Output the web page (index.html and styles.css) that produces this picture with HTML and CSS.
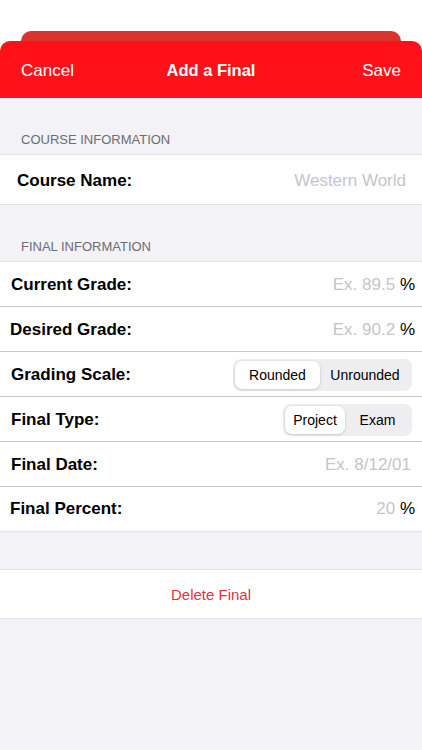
FILE: index.html
```html
<!DOCTYPE html>
<html>
<head>
<meta charset="utf-8">
<link rel="stylesheet" href="styles.css">
</head>
<body>
<div class="top"></div>
<div class="back-card"></div>
<header class="nav">
  <span class="nav-btn nav-left">Cancel</span>
  <span class="nav-title">Add a Final</span>
  <span class="nav-btn nav-right">Save</span>
</header>
<main class="content">
  <div class="section-head">COURSE INFORMATION</div>
  <div class="group">
    <div class="row row-course">
      <span class="label">Course Name:</span>
      <span class="value placeholder pad-16">Western World</span>
    </div>
  </div>

  <div class="section-head">FINAL INFORMATION</div>
  <div class="group">
    <div class="row">
      <span class="label">Current Grade:</span>
      <span class="value pad-7"><span class="placeholder">Ex. 89.5</span> %</span>
    </div>
    <div class="row">
      <span class="label label-10">Desired Grade:</span>
      <span class="value pad-7"><span class="placeholder">Ex. 90.2</span> %</span>
    </div>
    <div class="row">
      <span class="label">Grading Scale:</span>
      <div class="seg">
        <span class="seg-item seg-on seg-rounded">Rounded</span>
        <span class="seg-item seg-unrounded">Unrounded</span>
      </div>
    </div>
    <div class="row">
      <span class="label">Final Type:</span>
      <div class="seg">
        <span class="seg-item seg-on seg-project">Project</span>
        <span class="seg-item seg-exam">Exam</span>
      </div>
    </div>
    <div class="row">
      <span class="label">Final Date:</span>
      <span class="value placeholder pad-11">Ex. 8/12/01</span>
    </div>
    <div class="row row-last">
      <span class="label label-10">Final Percent:</span>
      <span class="value pad-7"><span class="placeholder">20</span> %</span>
    </div>
  </div>

  <div class="group delete-group">
    <div class="delete">Delete Final</div>
  </div>
</main>
</body>
</html>
```

FILE: styles.css
```css
* { box-sizing: border-box; }
html, body {
  margin: 0;
  padding: 0;
  height: 100%;
}
body {
  font-family: "Liberation Sans", Arial, sans-serif;
  background: #ffffff;
  color: #000;
  display: flex;
  flex-direction: column;
}
.top {
  height: 31px;
  background: #ffffff;
}
.back-card {
  height: 10px;
  margin: 0 21px;
  background: #db342c;
  border-radius: 10px 10px 0 0;
}
.nav {
  height: 57px;
  background: #fe1119;
  border-radius: 10px 10px 0 0;
  display: grid;
  grid-template-columns: 1fr auto 1fr;
  align-items: center;
  padding: 2px 21px 0 21px;
  color: #ffffff;
  font-size: 17px;
}
.nav-left { justify-self: start; }
.nav-right { justify-self: end; }
.nav-title {
  font-weight: 700;
  font-size: 16.5px;
}
.content {
  flex: 1;
  background: #f2f2f7;
}
.section-head {
  height: 56px;
  display: flex;
  align-items: flex-end;
  padding: 0 0 6px 21px;
  font-size: 13px;
  line-height: 16px;
  color: #6d6d72;
}
.group {
  background: #ffffff;
  border-top: 1px solid #e3e3e8;
  border-bottom: 1px solid #e3e3e8;
}
.row {
  height: 45px;
  display: flex;
  align-items: center;
  justify-content: space-between;
  border-bottom: 1px solid #c8c8cc;
  padding-left: 11px;
  padding-top: 2px;
}
.row-last { border-bottom: none; height: 44px; padding-top: 0; }
.row-course {
  height: 49px;
  border-bottom: none;
  padding-left: 17px;
}
.label {
  font-weight: 700;
  font-size: 17px;
}
.label-10 { margin-left: -1px; }
.value {
  font-size: 17px;
}
.placeholder { color: #c5c5c9; }
.pad-16 { padding-right: 16px; }
.pad-11 { padding-right: 11px; }
.pad-7 { padding-right: 7px; }
.seg {
  display: flex;
  height: 32px;
  padding: 2px;
  margin-right: 10px;
  background: #eeeef0;
  border-radius: 8px;
}
.seg-item {
  display: flex;
  align-items: center;
  justify-content: center;
  font-size: 14px;
  color: #000;
  border-radius: 7px;
}
.seg-on {
  background: #ffffff;
  box-shadow: 0 1px 3px rgba(0,0,0,0.15), 0 0 0 0.5px rgba(0,0,0,0.04);
}
.seg-rounded { width: 85px; }
.seg-unrounded { width: 90px; }
.seg-project { width: 60px; }
.seg-exam { width: 65px; }
.delete-group {
  margin-top: 37px;
}
.delete {
  height: 48px;
  display: flex;
  align-items: center;
  justify-content: center;
  font-size: 15px;
  color: #e2323c;
}
```
